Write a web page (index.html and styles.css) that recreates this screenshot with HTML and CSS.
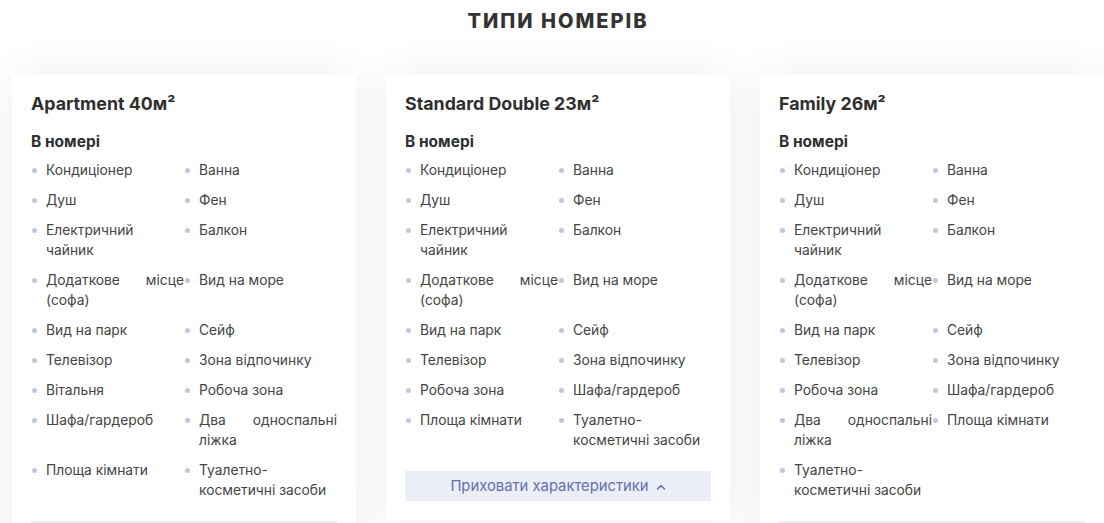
FILE: index.html
```html
<!DOCTYPE html>
<html lang="uk">
<head>
<meta charset="utf-8">
<title>Типи номерів</title>
<link rel="stylesheet" href="styles.css">
</head>
<body>
<section class="rooms">
  <h2 class="rooms-title">ТИПИ НОМЕРІВ</h2>
  <div class="cards">
    <article class="card">
      <h3 class="card-title">Apartment 40м²</h3>
      <h4 class="card-sub">В номері</h4>
      <ul class="features">
        <li>Кондиціонер</li>
        <li>Ванна</li>
        <li>Душ</li>
        <li>Фен</li>
        <li>Електричний чайник</li>
        <li>Балкон</li>
        <li>Додаткове місце (софа)</li>
        <li>Вид на море</li>
        <li>Вид на парк</li>
        <li>Сейф</li>
        <li>Телевізор</li>
        <li>Зона відпочинку</li>
        <li>Вітальня</li>
        <li>Робоча зона</li>
        <li>Шафа/гардероб</li>
        <li>Два односпальні ліжка</li>
        <li>Площа кімнати</li>
        <li>Туалетно-косметичні засоби</li>
      </ul>
      <button class="toggle" type="button">Приховати характеристики <svg class="chev" viewBox="0 0 10 6" width="10" height="6"><path d="M1.5 5 L5 1.6 L8.5 5" fill="none" stroke="currentColor" stroke-width="1.6" stroke-linecap="round" stroke-linejoin="round"/></svg></button>
    </article>
    <article class="card">
      <h3 class="card-title">Standard Double 23м²</h3>
      <h4 class="card-sub">В номері</h4>
      <ul class="features">
        <li>Кондиціонер</li>
        <li>Ванна</li>
        <li>Душ</li>
        <li>Фен</li>
        <li>Електричний чайник</li>
        <li>Балкон</li>
        <li>Додаткове місце (софа)</li>
        <li>Вид на море</li>
        <li>Вид на парк</li>
        <li>Сейф</li>
        <li>Телевізор</li>
        <li>Зона відпочинку</li>
        <li>Робоча зона</li>
        <li>Шафа/гардероб</li>
        <li>Площа кімнати</li>
        <li>Туалетно-косметичні засоби</li>
      </ul>
      <button class="toggle" type="button">Приховати характеристики <svg class="chev" viewBox="0 0 10 6" width="10" height="6"><path d="M1.5 5 L5 1.6 L8.5 5" fill="none" stroke="currentColor" stroke-width="1.6" stroke-linecap="round" stroke-linejoin="round"/></svg></button>
    </article>
    <article class="card">
      <h3 class="card-title">Family 26м²</h3>
      <h4 class="card-sub">В номері</h4>
      <ul class="features">
        <li>Кондиціонер</li>
        <li>Ванна</li>
        <li>Душ</li>
        <li>Фен</li>
        <li>Електричний чайник</li>
        <li>Балкон</li>
        <li>Додаткове місце (софа)</li>
        <li>Вид на море</li>
        <li>Вид на парк</li>
        <li>Сейф</li>
        <li>Телевізор</li>
        <li>Зона відпочинку</li>
        <li>Робоча зона</li>
        <li>Шафа/гардероб</li>
        <li>Два односпальні ліжка</li>
        <li>Площа кімнати</li>
        <li>Туалетно-косметичні засоби</li>
      </ul>
      <button class="toggle" type="button">Приховати характеристики <svg class="chev" viewBox="0 0 10 6" width="10" height="6"><path d="M1.5 5 L5 1.6 L8.5 5" fill="none" stroke="currentColor" stroke-width="1.6" stroke-linecap="round" stroke-linejoin="round"/></svg></button>
    </article>
  </div>
</section>
</body>
</html>
```

FILE: styles.css
```css
* { box-sizing: border-box; }
html, body { margin: 0; padding: 0; background: #ffffff; }
body {
  font-family: Inter, "Noto Sans", sans-serif;
  color: #3a3a3a;
  overflow: hidden;
}
.rooms {
  padding: 0 0 0 12px;
}
.rooms-title {
  margin: 0;
  padding-top: 8px;
  height: 75px;
  text-align: center;
  font-size: 20px;
  line-height: 26px;
  font-weight: 800;
  letter-spacing: 2px;
  color: #333333;
}
.cards {
  display: flex;
  gap: 30px;
  align-items: flex-start;
}
.card {
  flex: 0 0 344px;
  background: #ffffff;
  padding: 17px 19px 19px;
  box-shadow: 0 0 40px rgba(0, 0, 0, 0.07);
}
.card-title {
  margin: 0;
  font-size: 17.8px;
  line-height: 24px;
  font-weight: 700;
  color: #2f2f2f;
}
.card-sub {
  margin: 16px 0 8px;
  font-size: 15.5px;
  line-height: 20px;
  font-weight: 700;
  color: #2f2f2f;
}
.features {
  list-style: none;
  margin: 0;
  padding: 0;
  display: grid;
  grid-template-columns: 153px 153px;
  row-gap: 10px;
}
.features li {
  position: relative;
  padding-left: 15px;
  font-size: 13.8px;
  line-height: 20px;
  text-align: justify;
  color: #444444;
}
.features li::before {
  content: "";
  position: absolute;
  left: 1px;
  top: 8px;
  width: 5px;
  height: 5px;
  border-radius: 50%;
  background: #c3c6dc;
}
.toggle {
  display: flex;
  align-items: center;
  justify-content: center;
  gap: 7px;
  width: 100%;
  height: 30px;
  margin-top: 21px;
  border: 0;
  background: #ebedf7;
  color: #6470ae;
  font-family: Inter, "Noto Sans", sans-serif;
  font-size: 14.8px;
  padding: 0;
}
.chev { display: block; margin-top: 1px; }
```
